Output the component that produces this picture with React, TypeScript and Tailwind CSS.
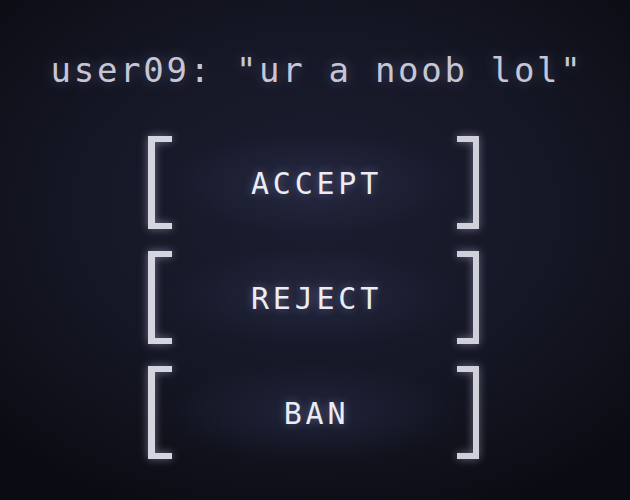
const mono = "font-['DejaVu_Sans_Mono','Liberation_Mono',monospace]";

function Bracket({ side }: { side: "left" | "right" }) {
  return (
    <div
      className={
        side === "left"
          ? "h-full w-[24px] border-y-[6px] border-l-[7px] border-[#d4d5de] drop-shadow-[0_0_4px_rgba(220,225,255,0.45)]"
          : "h-full w-[22px] border-y-[6px] border-r-[6px] border-[#cfd0da] drop-shadow-[0_0_4px_rgba(220,225,255,0.45)]"
      }
    />
  );
}

function ActionButton({ label }: { label: string }) {
  return (
    <button className="flex h-[93px] w-[331px] items-center justify-between bg-[radial-gradient(ellipse_45%_55%_at_center,rgba(45,50,80,0.5)_0%,rgba(45,50,80,0)_100%)]">
      <Bracket side="left" />
      <span
        className={`${mono} -mr-[4px] pt-[3px] text-[30px] leading-none tracking-[3.8px] text-[#ebecf4] [text-shadow:0_0_10px_rgba(200,210,255,0.35)]`}
      >
        {label}
      </span>
      <Bracket side="right" />
    </button>
  );
}

export default function App() {
  return (
    <div className="flex h-[500px] w-[630px] flex-col items-center bg-[radial-gradient(ellipse_70%_65%_at_50%_42%,#1c1e31_0%,#151725_55%,#0b0c13_100%)] pt-[53px]">
      <div
        className={`${mono} ml-[4px] text-[34px] leading-none tracking-[2.7px] text-[#c6c7d6] [text-shadow:0_0_14px_rgba(190,200,255,0.3)]`}
      >
        user09: "ur a noob lol"
      </div>
      <div className="mt-[49px] mr-[3px] flex flex-col gap-[22px]">
        <ActionButton label="ACCEPT" />
        <ActionButton label="REJECT" />
        <ActionButton label="BAN" />
      </div>
    </div>
  );
}
